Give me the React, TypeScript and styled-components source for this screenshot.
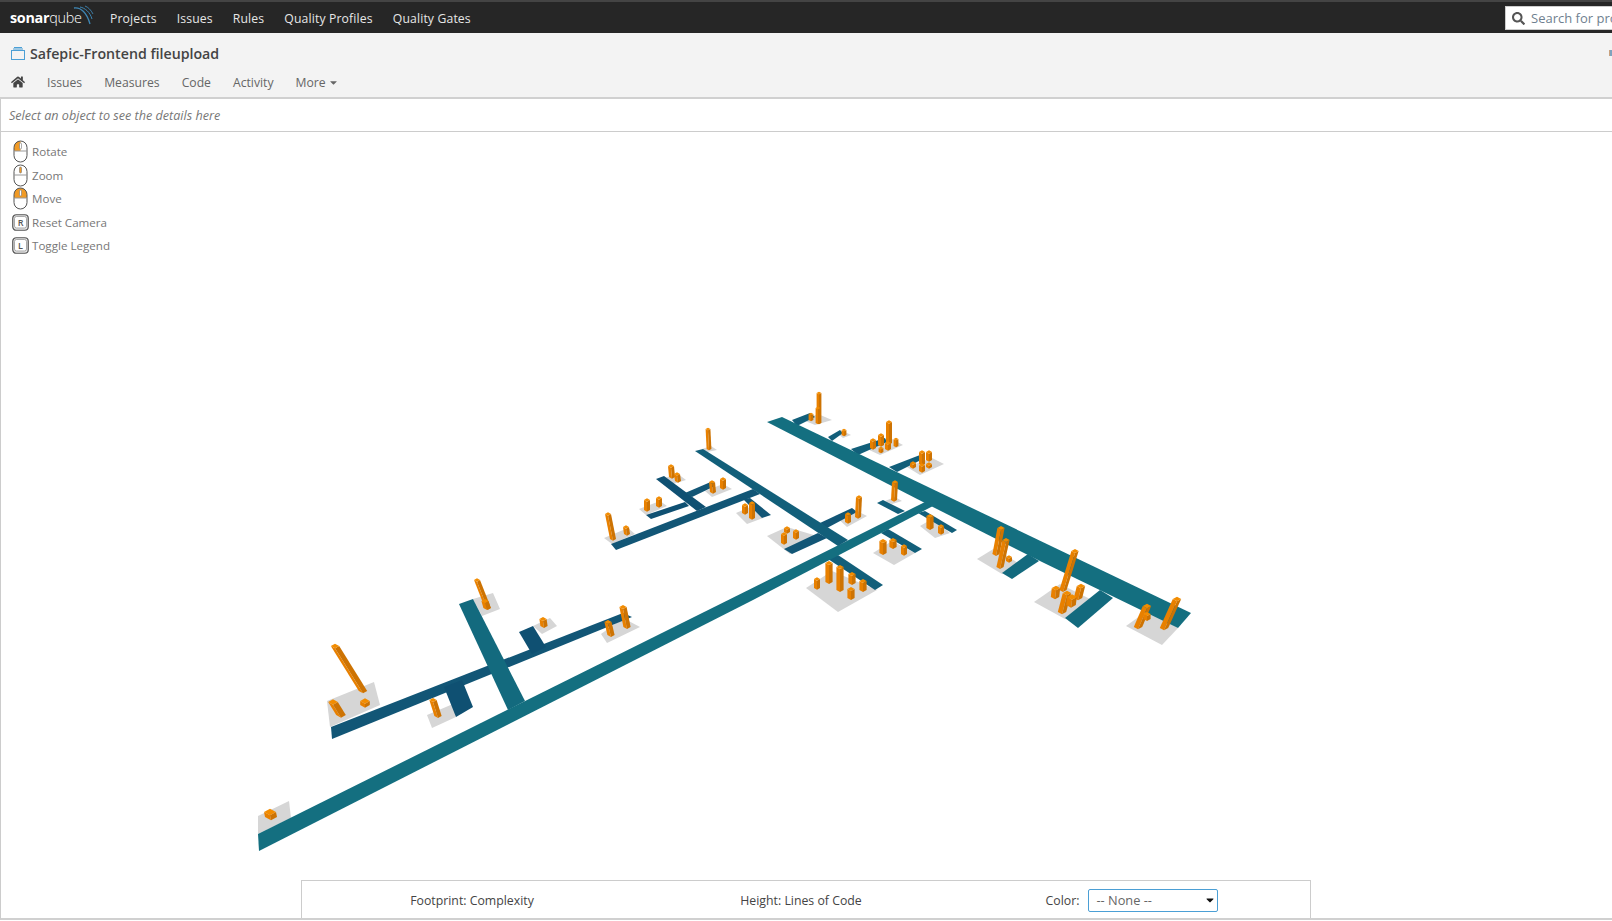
import { createGlobalStyle } from "styled-components";
import styled from "styled-components";
import { FaHome, FaSearch, FaCaretDown } from "react-icons/fa";

const GlobalStyle = createGlobalStyle`
  html, body {
    margin: 0;
    padding: 0;
    height: 100%;
    overflow: hidden;
    background: #fff;
  }
  body {
    font-family: "Open Sans", "Noto Sans", sans-serif;
    font-size: 13px;
    color: #444;
  }
`;

const Page = styled.div`
  display: flex;
  flex-direction: column;
  width: 1612px;
  height: 921px;
  overflow: hidden;
`;

const Navbar = styled.header`
  display: flex;
  align-items: center;
  height: 31px;
  flex: none;
  padding-left: 10px;
  background: #262626;
  border-top: 2px solid #444;
`;

const Logo = styled.div`
  position: relative;
  width: 100px;
  font-size: 14.4px;
  line-height: 20px;
  letter-spacing: -0.3px;
  color: #fff;
`;

const LogoBold = styled.span`
  font-weight: 700;
`;

const LogoLight = styled.span`
  font-weight: 300;
`;

const LogoWaves = styled.svg`
  position: absolute;
  top: -3px;
  left: 62px;
`;

const TopLink = styled.a`
  margin-right: 20px;
  padding-top: 2px;
  font-size: 12.2px;
  letter-spacing: 0.15px;
  color: #e6e6e6;
`;

const SearchBox = styled.div`
  display: flex;
  align-items: center;
  gap: 6px;
  flex: none;
  width: 203px;
  height: 24px;
  margin-left: auto;
  margin-right: -96px;
  padding: 1px 0 0 6px;
  box-sizing: border-box;
  background: #fff;
  border: 1px solid #ccc;
  color: #6f7f8f;
  font-size: 13px;
`;

const ContextBar = styled.div`
  flex: none;
  height: 64px;
  padding: 0 0 0 11px;
  background: #f3f3f3;
  border-bottom: 2px solid #d0d0d0;
`;

const TitleRow = styled.div`
  display: flex;
  align-items: center;
  gap: 5px;
  height: 40px;
  box-sizing: border-box;
`;

const Title = styled.h1`
  margin: 0;
  font-size: 14.2px;
  font-weight: 600;
  color: #444;
`;

const ClippedMark = styled.span`
  flex: none;
  width: 2px;
  height: 6px;
  margin-left: auto;
  background: #7fa3bd;
  box-shadow: -1px 0 0 #c9a27e;
`;

const TabRow = styled.nav`
  display: flex;
  align-items: center;
  height: 18px;
  color: #444;
`;

const Tab = styled.a`
  display: flex;
  align-items: center;
  gap: 2px;
  margin-right: 22px;
  font-size: 12.2px;
  color: #666;
`;

const HomeTab = styled(Tab)`
  margin-right: 22px;
  color: #444;
`;

const DetailsBar = styled.div`
  flex: none;
  height: 32px;
  display: flex;
  align-items: center;
  padding-left: 8px;
  border-bottom: 1px solid #ccc;
  border-left: 1px solid #ccc;
  font-size: 12.6px;
  font-style: italic;
  color: #777;
`;

const Canvas = styled.main`
  position: relative;
  flex: 1;
  display: flex;
  flex-direction: column;
  justify-content: space-between;
  border-left: 1px solid #ccc;
  border-bottom: 2px solid #d0d0d0;
  margin-bottom: 1px;
`;

const City = styled.svg`
  position: absolute;
  top: 0;
  left: -1px;
`;

const Controls = styled.ul`
  position: relative;
  list-style: none;
  margin: 0;
  padding: 8px 0 0 11px;
`;

const ControlRow = styled.li`
  display: flex;
  align-items: center;
  gap: 3px;
  height: 23.5px;
  font-size: 11.6px;
  color: #777;
`;

const IconSlot = styled.span`
  display: flex;
  justify-content: center;
  width: 17px;
`;

const Legend = styled.div`
  position: relative;
  display: grid;
  grid-template-columns: 340px 318px 1fr;
  align-items: center;
  align-self: center;
  width: 1010px;
  height: 38px;
  padding: 1px 6px 0 0;
  box-sizing: border-box;
  margin-left: -1px;
  background: #fff;
  border: 1px solid #ccc;
  border-bottom: 0;
  font-size: 12.3px;
  color: #444;
`;

const LegendCell = styled.div`
  display: flex;
  align-items: center;
  justify-content: center;
  gap: 9px;
`;

const FakeSelect = styled.div`
  display: flex;
  align-items: center;
  justify-content: space-between;
  width: 130px;
  height: 23px;
  box-sizing: border-box;
  padding: 0 1px 0 7px;
  border: 1px solid #4b9fd5;
  border-radius: 2px;
  font-size: 12.8px;
  color: #666;
`;

type Pt = number[];

// polygon points in page coordinates
const plates: number[][] = [
  [327, 700, 374, 681, 380, 704, 330, 726],
  [427, 714, 453, 703, 456, 716, 432, 727],
  [258, 815, 289, 800, 291, 817, 258, 833],
  [473, 598, 493, 592, 500, 608, 482, 615],
  [533, 625, 550, 617, 557, 625, 542, 633],
  [601, 633, 623, 617, 640, 626, 607, 642],
  [803, 419, 818, 413, 832, 419, 815, 424],
  [838, 433, 845, 431, 851, 434, 843, 437],
  [867, 448, 892, 438, 903, 444, 880, 454],
  [907, 466, 932, 457, 944, 463, 920, 474],
  [977, 558, 995, 547, 1018, 562, 1002, 573],
  [1034, 601, 1060, 583, 1090, 598, 1065, 618],
  [1126, 625, 1147, 610, 1178, 627, 1162, 644],
  [604, 537, 628, 527, 635, 533, 612, 543],
  [639, 508, 660, 500, 667, 505, 646, 514],
  [664, 477, 678, 473, 686, 479, 673, 483],
  [705, 490, 723, 483, 732, 488, 712, 496],
  [736, 512, 750, 506, 763, 517, 747, 523],
  [702, 448, 711, 445, 717, 449, 707, 451],
  [767, 535, 787, 526, 817, 535, 790, 553],
  [835, 515, 853, 508, 867, 515, 847, 526],
  [885, 500, 895, 496, 902, 500, 892, 503],
  [920, 525, 932, 518, 950, 532, 935, 537],
  [873, 552, 892, 540, 915, 552, 894, 564],
  [806, 587, 832, 570, 877, 589, 838, 611],
];

const TEAL = "#146f80";
const TEAL2 = "#136a7e";
const MID = "#125f7a";
const BLUE = "#125676";
const DARK = "#0f5072";

const roads: { c: string; p: Pt }[] = [
  { c: BLUE, p: [331, 726, 623, 612, 632, 616, 332, 738] },
  { c: DARK, p: [519, 631, 533, 625, 546, 646, 532, 653] },
  { c: DARK, p: [444, 686, 462, 679, 473, 706, 456, 716] },
  { c: TEAL2, p: [459, 603, 473, 598, 525, 700, 508, 709] },
  { c: MID, p: [828, 558, 838, 554, 883, 584, 875, 589] },
  { c: MID, p: [881, 532, 888, 528, 922, 548, 915, 552] },
  { c: MID, p: [918, 512, 925, 510, 957, 529, 952, 532] },
  { c: MID, p: [877, 502, 883, 499, 905, 510, 898, 513] },
  { c: TEAL, p: [258, 833, 925, 501, 933, 505, 753, 599, 259, 850] },
  { c: BLUE, p: [611, 543, 753, 488, 760, 493, 616, 549] },
  { c: DARK, p: [656, 478, 664, 475, 706, 506, 697, 510] },
  { c: DARK, p: [646, 514, 685, 501, 689, 505, 651, 518] },
  { c: BLUE, p: [685, 492, 713, 480, 715, 485, 692, 496] },
  { c: BLUE, p: [743, 498, 750, 497, 771, 514, 762, 517] },
  { c: BLUE, p: [820, 522, 852, 507, 857, 511, 827, 527] },
  { c: BLUE, p: [784, 548, 818, 532, 827, 537, 792, 553] },
  { c: MID, p: [695, 450, 703, 448, 848, 539, 838, 545] },
  { c: MID, p: [792, 419, 810, 412, 815, 416, 797, 425] },
  { c: MID, p: [828, 436, 840, 429, 843, 432, 832, 440] },
  { c: MID, p: [851, 448, 885, 437, 887, 441, 858, 454] },
  { c: MID, p: [889, 466, 920, 454, 923, 458, 897, 471] },
  { c: TEAL2, p: [1028, 553, 1039, 560, 1012, 578, 1002, 572] },
  { c: TEAL2, p: [1100, 589, 1113, 597, 1078, 627, 1065, 617] },
  { c: TEAL, p: [767, 421, 782, 416, 1191, 612, 1178, 627, 1042, 561, 923, 501] },
];

// base x, base y, top x, top y, width
const bars: number[][] = [
  [363, 690, 335, 645, 7], [341, 714, 333, 701, 8], [365, 704, 365, 700, 8],
  [438, 715, 433, 699, 6], [271, 816, 270, 811, 10],
  [488, 607, 477, 579, 5], [487, 607, 485, 600, 6], [544, 625, 543, 618, 6],
  [611, 634, 608, 621, 6], [627, 626, 623, 606, 6],
  [613, 538, 608, 513, 5], [627, 533, 626, 526, 5], [647, 509, 647, 499, 5],
  [659, 505, 659, 497, 5], [672, 476, 671, 465, 5], [678, 480, 677, 473, 5],
  [713, 491, 712, 481, 5], [723, 487, 723, 478, 5], [745, 512, 745, 504, 5],
  [752, 517, 752, 502, 5], [709, 448, 708, 428, 4], [787, 531, 787, 527, 5],
  [784, 542, 784, 533, 5], [796, 537, 796, 530, 5], [848, 521, 848, 513, 5],
  [858, 516, 859, 496, 5], [894, 499, 895, 481, 5], [930, 527, 930, 515, 6],
  [941, 532, 941, 525, 5], [883, 552, 883, 540, 6], [893, 546, 893, 539, 6],
  [904, 553, 904, 545, 5], [829, 581, 829, 562, 6], [817, 587, 817, 578, 5],
  [852, 582, 852, 573, 6], [840, 589, 840, 566, 6], [863, 589, 863, 580, 6],
  [851, 597, 851, 588, 6],
  [819, 422, 819, 392, 4], [818, 422, 818, 407, 4], [811, 419, 811, 413, 4],
  [844, 434, 844, 429, 4], [889, 442, 889, 421, 5], [873, 447, 873, 439, 5],
  [881, 444, 881, 434, 5], [888, 448, 888, 442, 5], [896, 445, 896, 438, 4],
  [881, 451, 881, 447, 4], [922, 463, 922, 451, 5], [929, 459, 929, 451, 5],
  [922, 470, 922, 464, 5], [913, 466, 913, 462, 5], [929, 466, 929, 463, 5],
  [996, 553, 1001, 527, 6], [1000, 566, 1006, 539, 6], [1009, 560, 1009, 556, 5],
  [1063, 589, 1075, 550, 6], [1055, 596, 1056, 587, 7], [1062, 611, 1067, 592, 7],
  [1078, 597, 1081, 585, 7], [1071, 604, 1072, 596, 8],
  [1138, 626, 1147, 605, 7], [1147, 618, 1147, 613, 6], [1164, 627, 1177, 598, 7],
];

function Bar({ b }: { b: number[] }) {
  const [x1, y1, x2, y2, w0] = b;
  const w = w0 * 1.2;
  const h = w / 2;
  const d = w * 0.28;
  return (
    <g>
      <polygon points={`${x1 - h},${y1} ${x1},${y1 + d} ${x2},${y2 + d} ${x2 - h},${y2}`} fill="#e88000" />
      <polygon points={`${x1},${y1 + d} ${x1 + h},${y1} ${x2 + h},${y2} ${x2},${y2 + d}`} fill="#cd7303" />
      <polygon points={`${x2 - h},${y2} ${x2},${y2 - d} ${x2 + h},${y2} ${x2},${y2 + d}`} fill="#f28c00" />
    </g>
  );
}

function Mouse({ fill }: { fill: "left" | "wheel" | "both" }) {
  return (
    <svg width="15" height="23" viewBox="0 0 15 23">
      {fill === "left" && <path d="M7.5 1C3.5 1 1 4 1 8V11H7.5Z" fill="#f09a25" />}
      {fill === "both" && <path d="M1 11V8C1 4 4 1 7.5 1S14 4 14 8V11Z" fill="#f09a25" />}
      <rect x="1" y="1" width="13" height="21" rx="6.5" fill="none" stroke="#555" />
      <path d="M1 11H14" stroke="#999" />
      <rect x="6.5" y="3" width="2" height="6" rx="1" fill={fill === "wheel" ? "#f09a25" : "#fff"} stroke="#777" strokeWidth="0.6" />
    </svg>
  );
}

function KeyCap({ k }: { k: string }) {
  return (
    <svg width="17" height="17" viewBox="0 0 17 17">
      <rect x="0.75" y="0.75" width="15.5" height="15.5" rx="3.5" fill="#e8e8e8" stroke="#555" strokeWidth="1.2" />
      <rect x="2.5" y="2.5" width="12" height="11.5" rx="2" fill="#fff" stroke="#888" strokeWidth="0.7" />
      <text x="8.5" y="11.5" fontSize="9" fontWeight="600" textAnchor="middle" fill="#555" fontFamily="Open Sans, sans-serif">{k}</text>
    </svg>
  );
}

export default function App() {
  return (
    <>
      <GlobalStyle />
      <Page>
        <Navbar>
          <Logo>
            <LogoBold>sonar</LogoBold>
            <LogoLight>qube</LogoLight>
            <LogoWaves width="22" height="20" viewBox="0 0 22 20" fill="none" stroke="#3f86b3">
              <path d="M2 3C9 2 15 8 18 19" strokeWidth="1.3" />
              <path d="M8 2C13 3 18 7 20 14" strokeWidth="1" />
              <path d="M13 1C16 2 19 5 21 9" strokeWidth="0.9" />
            </LogoWaves>
          </Logo>
          <TopLink>Projects</TopLink>
          <TopLink>Issues</TopLink>
          <TopLink>Rules</TopLink>
          <TopLink>Quality Profiles</TopLink>
          <TopLink>Quality Gates</TopLink>
          <SearchBox>
            <FaSearch size={13} color="#555" />
            Search for projects
          </SearchBox>
        </Navbar>
        <ContextBar>
          <TitleRow>
            <svg width="14" height="13" viewBox="0 0 14 13" fill="none" stroke="#4b9fd5">
              <rect x="0.5" y="3.5" width="13" height="9" />
              <path d="M2 2H12M3 0.5H11" />
            </svg>
            <Title>Safepic-Frontend fileupload</Title>
            <ClippedMark />
          </TitleRow>
          <TabRow>
            <HomeTab><FaHome size={14} /></HomeTab>
            <Tab>Issues</Tab>
            <Tab>Measures</Tab>
            <Tab>Code</Tab>
            <Tab>Activity</Tab>
            <Tab>More <FaCaretDown size={11} /></Tab>
          </TabRow>
        </ContextBar>
        <DetailsBar>Select an object to see the details here</DetailsBar>
        <Canvas>
          <City width="1612" height="788" viewBox="0 131 1612 788">
            {plates.map((p, i) => <polygon key={i} points={p.join(" ")} fill="#d6d6d6" />)}
            {roads.map((r, i) => <polygon key={i} points={r.p.join(" ")} fill={r.c} />)}
            {bars.map((b, i) => <Bar key={i} b={b} />)}
          </City>
          <Controls>
            <ControlRow><IconSlot><Mouse fill="left" /></IconSlot>Rotate</ControlRow>
            <ControlRow><IconSlot><Mouse fill="wheel" /></IconSlot>Zoom</ControlRow>
            <ControlRow><IconSlot><Mouse fill="both" /></IconSlot>Move</ControlRow>
            <ControlRow><IconSlot><KeyCap k="R" /></IconSlot>Reset Camera</ControlRow>
            <ControlRow><IconSlot><KeyCap k="L" /></IconSlot>Toggle Legend</ControlRow>
          </Controls>
          <Legend>
            <LegendCell>Footprint: Complexity</LegendCell>
            <LegendCell>Height: Lines of Code</LegendCell>
            <LegendCell>
              Color:
              <FakeSelect>-- None -- <FaCaretDown size={12} color="#111" /></FakeSelect>
            </LegendCell>
          </Legend>
        </Canvas>
      </Page>
    </>
  );
}
